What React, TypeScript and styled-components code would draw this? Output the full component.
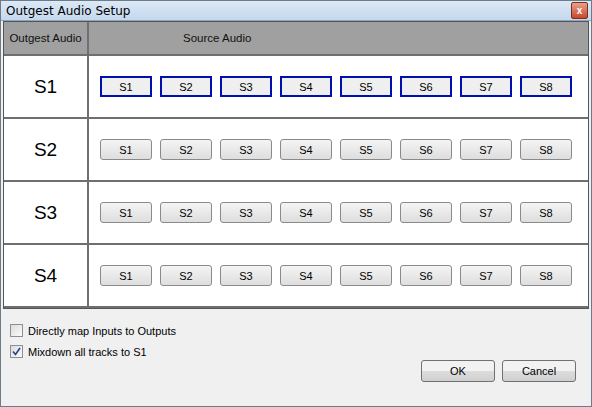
import React from "react"
import styled, { createGlobalStyle } from "styled-components"

const Global = createGlobalStyle`
  body { margin: 0; background: #f0f0f0; font-family: "Liberation Sans", Arial, sans-serif; }
`

const Window = styled.div`
  width: 592px;
  height: 407px;
  box-sizing: border-box;
  background: #f0f0f0;
  border: 1px solid #6d7a88;
  display: flex;
  flex-direction: column;
  position: relative;
`

const TitleBar = styled.div`
  height: 19px;
  background: linear-gradient(#dce8f5, #c4d8ee);
  display: flex;
  align-items: center;
  padding-left: 5px;
  font-family: "DejaVu Sans", sans-serif;
  font-size: 12px;
  color: #000;
  border-bottom: 1px solid #8ea4c0;
`

const CloseBtn = styled.div`
  position: absolute;
  right: 3px;
  top: 1px;
  width: 15px;
  height: 15px;
  border: 1px solid #7a3020;
  border-radius: 2px;
  background: linear-gradient(#e8a08a, #c8482a);
  color: #fff;
  font-size: 10px;
  font-weight: bold;
  display: flex;
  align-items: center;
  justify-content: center;
`

const Grid = styled.div`
  margin: 0 2px 0 2px;
  border: 1px solid #555;
  display: grid;
  grid-template-columns: 85px 1fr;
  grid-template-rows: 34px repeat(4, 63px);
  background: #fff;
`

const HeadCell = styled.div<{ $pad?: number }>`
  background: #a0a0a0;
  border-right: ${(p) => (p.$pad ? "none" : "2px solid #6f6f6f")};
  border-bottom: 2px solid #6f6f6f;
  display: flex;
  align-items: center;
  font-size: 11.5px;
  color: #111;
  padding-left: ${(p) => p.$pad ?? 0}px;
  justify-content: ${(p) => (p.$pad ? "flex-start" : "center")};
`

const LabelCell = styled.div`
  border-right: 2px solid #6f6f6f;
  border-bottom: 2px solid #6f6f6f;
  display: flex;
  align-items: center;
  justify-content: center;
  font-size: 19px;
  color: #000;
`

const ButtonCell = styled.div`
  border-bottom: 2px solid #6f6f6f;
  display: flex;
  align-items: center;
  padding-left: 11px;
  gap: 8px;
`

const SrcButton = styled.button<{ $sel?: boolean }>`
  width: 52px;
  height: 21px;
  box-sizing: border-box;
  font-family: "Liberation Sans", Arial, sans-serif;
  font-size: 11px;
  color: #000;
  padding: 0;
  border-radius: ${(p) => (p.$sel ? 0 : 3)}px;
  border: ${(p) => (p.$sel ? "2px solid #0010b0" : "1px solid #8a8a8a")};
  background: ${(p) => (p.$sel ? "#efefef" : "linear-gradient(#f4f4f4, #dedede)")};
`

const Bottom = styled.div`
  padding: 15px 0 0 9px;
  display: flex;
  flex-direction: column;
  gap: 8px;
`

const CheckRow = styled.label`
  display: flex;
  align-items: center;
  gap: 5px;
  font-size: 11px;
  color: #000;
`

const Box = styled.span`
  width: 11px;
  height: 11px;
  border: 1px solid #8e8f8f;
  background: linear-gradient(135deg, #dcdcdc, #fafafa);
  display: flex;
  align-items: center;
  justify-content: center;
`

const Actions = styled.div`
  display: flex;
  justify-content: flex-end;
  gap: 7px;
  padding-right: 15px;
  margin-top: 2px;
`

const DlgButton = styled.button`
  width: 74px;
  height: 22px;
  font-family: "Liberation Sans", Arial, sans-serif;
  font-size: 11px;
  color: #000;
  border: 1px solid #707070;
  border-radius: 3px;
  background: linear-gradient(#f2f2f2 50%, #dddddd 50%, #cfcfcf);
`

const sources = ["S1", "S2", "S3", "S4", "S5", "S6", "S7", "S8"]
const outputs = ["S1", "S2", "S3", "S4"]

export default function App() {
  return (
    <Window>
      <Global />
      <TitleBar>Outgest Audio Setup</TitleBar>
      <CloseBtn>x</CloseBtn>
      <Grid>
        <HeadCell>Outgest Audio</HeadCell>
        <HeadCell $pad={94}>Source Audio</HeadCell>
        {outputs.map((o, i) => (
          <React.Fragment key={o}>
            <LabelCell>{o}</LabelCell>
            <ButtonCell>
              {sources.map((s) => (
                <SrcButton key={s} $sel={i === 0}>{s}</SrcButton>
              ))}
            </ButtonCell>
          </React.Fragment>
        ))}
      </Grid>
      <Bottom>
        <CheckRow>
          <Box />
          Directly map Inputs to Outputs
        </CheckRow>
        <CheckRow>
          <Box>
            <svg width="9" height="9" viewBox="0 0 9 9">
              <path d="M1 4.5 L3.5 7.5 L8 1" stroke="#2a3f8f" strokeWidth="1.6" fill="none" />
            </svg>
          </Box>
          Mixdown all tracks to S1
        </CheckRow>
      </Bottom>
      <Actions>
        <DlgButton>OK</DlgButton>
        <DlgButton>Cancel</DlgButton>
      </Actions>
    </Window>
  )
}
